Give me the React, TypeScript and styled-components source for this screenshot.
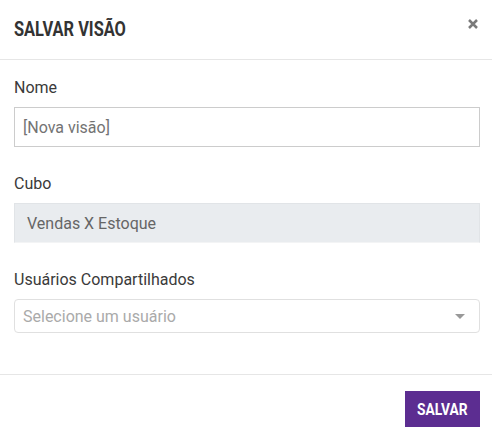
import React from "react";
import styled, { createGlobalStyle } from "styled-components";

const Global = createGlobalStyle`
  html, body { margin: 0; padding: 0; background: #fff; }
  body { font-family: Roboto, "Noto Sans", sans-serif; color: #333; }
  * { box-sizing: border-box; }
`;

const Dialog = styled.div`
  width: 492px;
  height: 442px;
  display: flex;
  flex-direction: column;
  background: #fff;
`;

const Header = styled.div`
  height: 60px;
  flex: none;
  display: flex;
  align-items: center;
  justify-content: space-between;
  padding: 0 14px 2px 14px;
  border-bottom: 1px solid #e6e6e6;
`;

const Title = styled.h4`
  margin: 0;
  font-family: Roboto, sans-serif;
  font-weight: 700;
  font-size: 20px;
  color: #333;
  transform: scaleX(0.82);
  transform-origin: left center;
  white-space: nowrap;
`;

const CloseButton = styled.button`
  align-self: flex-start;
  margin: 19px 0 0 0;
  border: 0;
  background: none;
  padding: 0;
  width: 10px;
  height: 10px;
  display: flex;
  cursor: pointer;
`;

const Body = styled.div`
  flex: 1;
  padding: 18px 12px 0 14px;
  display: flex;
  flex-direction: column;
  gap: 27px;
`;

const Field = styled.div`
  display: flex;
  flex-direction: column;
  gap: 10px;
`;

const Label = styled.label`
  font-size: 16px;
  line-height: 19px;
  color: #3a3a3a;
`;

const TextInput = styled.div<{ $disabled?: boolean }>`
  height: 40px;
  display: flex;
  align-items: center;
  padding: 0 ${(p) => (p.$disabled ? "12px" : "8px")};
  font-size: 16px;
  border: 1px solid ${(p) => (p.$disabled ? "#e1e4e7" : "#ccc")};
  border-bottom-color: ${(p) => (p.$disabled ? "#f3f4f5" : "#ccc")};
  background: ${(p) => (p.$disabled ? "#e9ecef" : "#fff")};
  color: ${(p) => (p.$disabled ? "#666" : "#737373")};
`;

const Select = styled.div`
  height: 34px;
  display: flex;
  align-items: center;
  justify-content: space-between;
  padding: 0 14px 0 8px;
  border: 1px solid #e0e0e0;
  border-radius: 4px;
  font-size: 16px;
  color: #aaa;
`;

const Caret = styled.span`
  width: 0;
  height: 0;
  border-left: 5px solid transparent;
  border-right: 5px solid transparent;
  border-top: 5px solid #999;
`;

const Footer = styled.div`
  height: 68px;
  flex: none;
  border-top: 1px solid #e6e6e6;
  display: flex;
  align-items: flex-start;
  justify-content: flex-end;
  padding: 16px 12px 0 14px;
`;

const PrimaryButton = styled.button`
  width: 75px;
  height: 36px;
  padding: 0;
  border: 0;
  background: #5c2d91;
  display: flex;
  align-items: center;
  justify-content: center;
  cursor: pointer;
`;

const ButtonText = styled.span`
  color: #fff;
  font-family: Roboto, sans-serif;
  font-weight: 700;
  font-size: 16px;
  transform: scaleX(0.86);
  white-space: nowrap;
`;

export default function App() {
  return (
    <>
      <Global />
      <Dialog>
        <Header>
          <Title>SALVAR VISÃO</Title>
          <CloseButton aria-label="Fechar">
            <svg width="10" height="10" viewBox="0 0 10 10">
              <path d="M1 1L9 9M9 1L1 9" stroke="#7a7a7a" strokeWidth="2.5" />
            </svg>
          </CloseButton>
        </Header>
        <Body>
          <Field>
            <Label>Nome</Label>
            <TextInput>[Nova visão]</TextInput>
          </Field>
          <Field>
            <Label>Cubo</Label>
            <TextInput $disabled>Vendas X Estoque</TextInput>
          </Field>
          <Field>
            <Label>Usuários Compartilhados</Label>
            <Select>
              <span>Selecione um usuário</span>
              <Caret />
            </Select>
          </Field>
        </Body>
        <Footer>
          <PrimaryButton>
            <ButtonText>SALVAR</ButtonText>
          </PrimaryButton>
        </Footer>
      </Dialog>
    </>
  );
}
